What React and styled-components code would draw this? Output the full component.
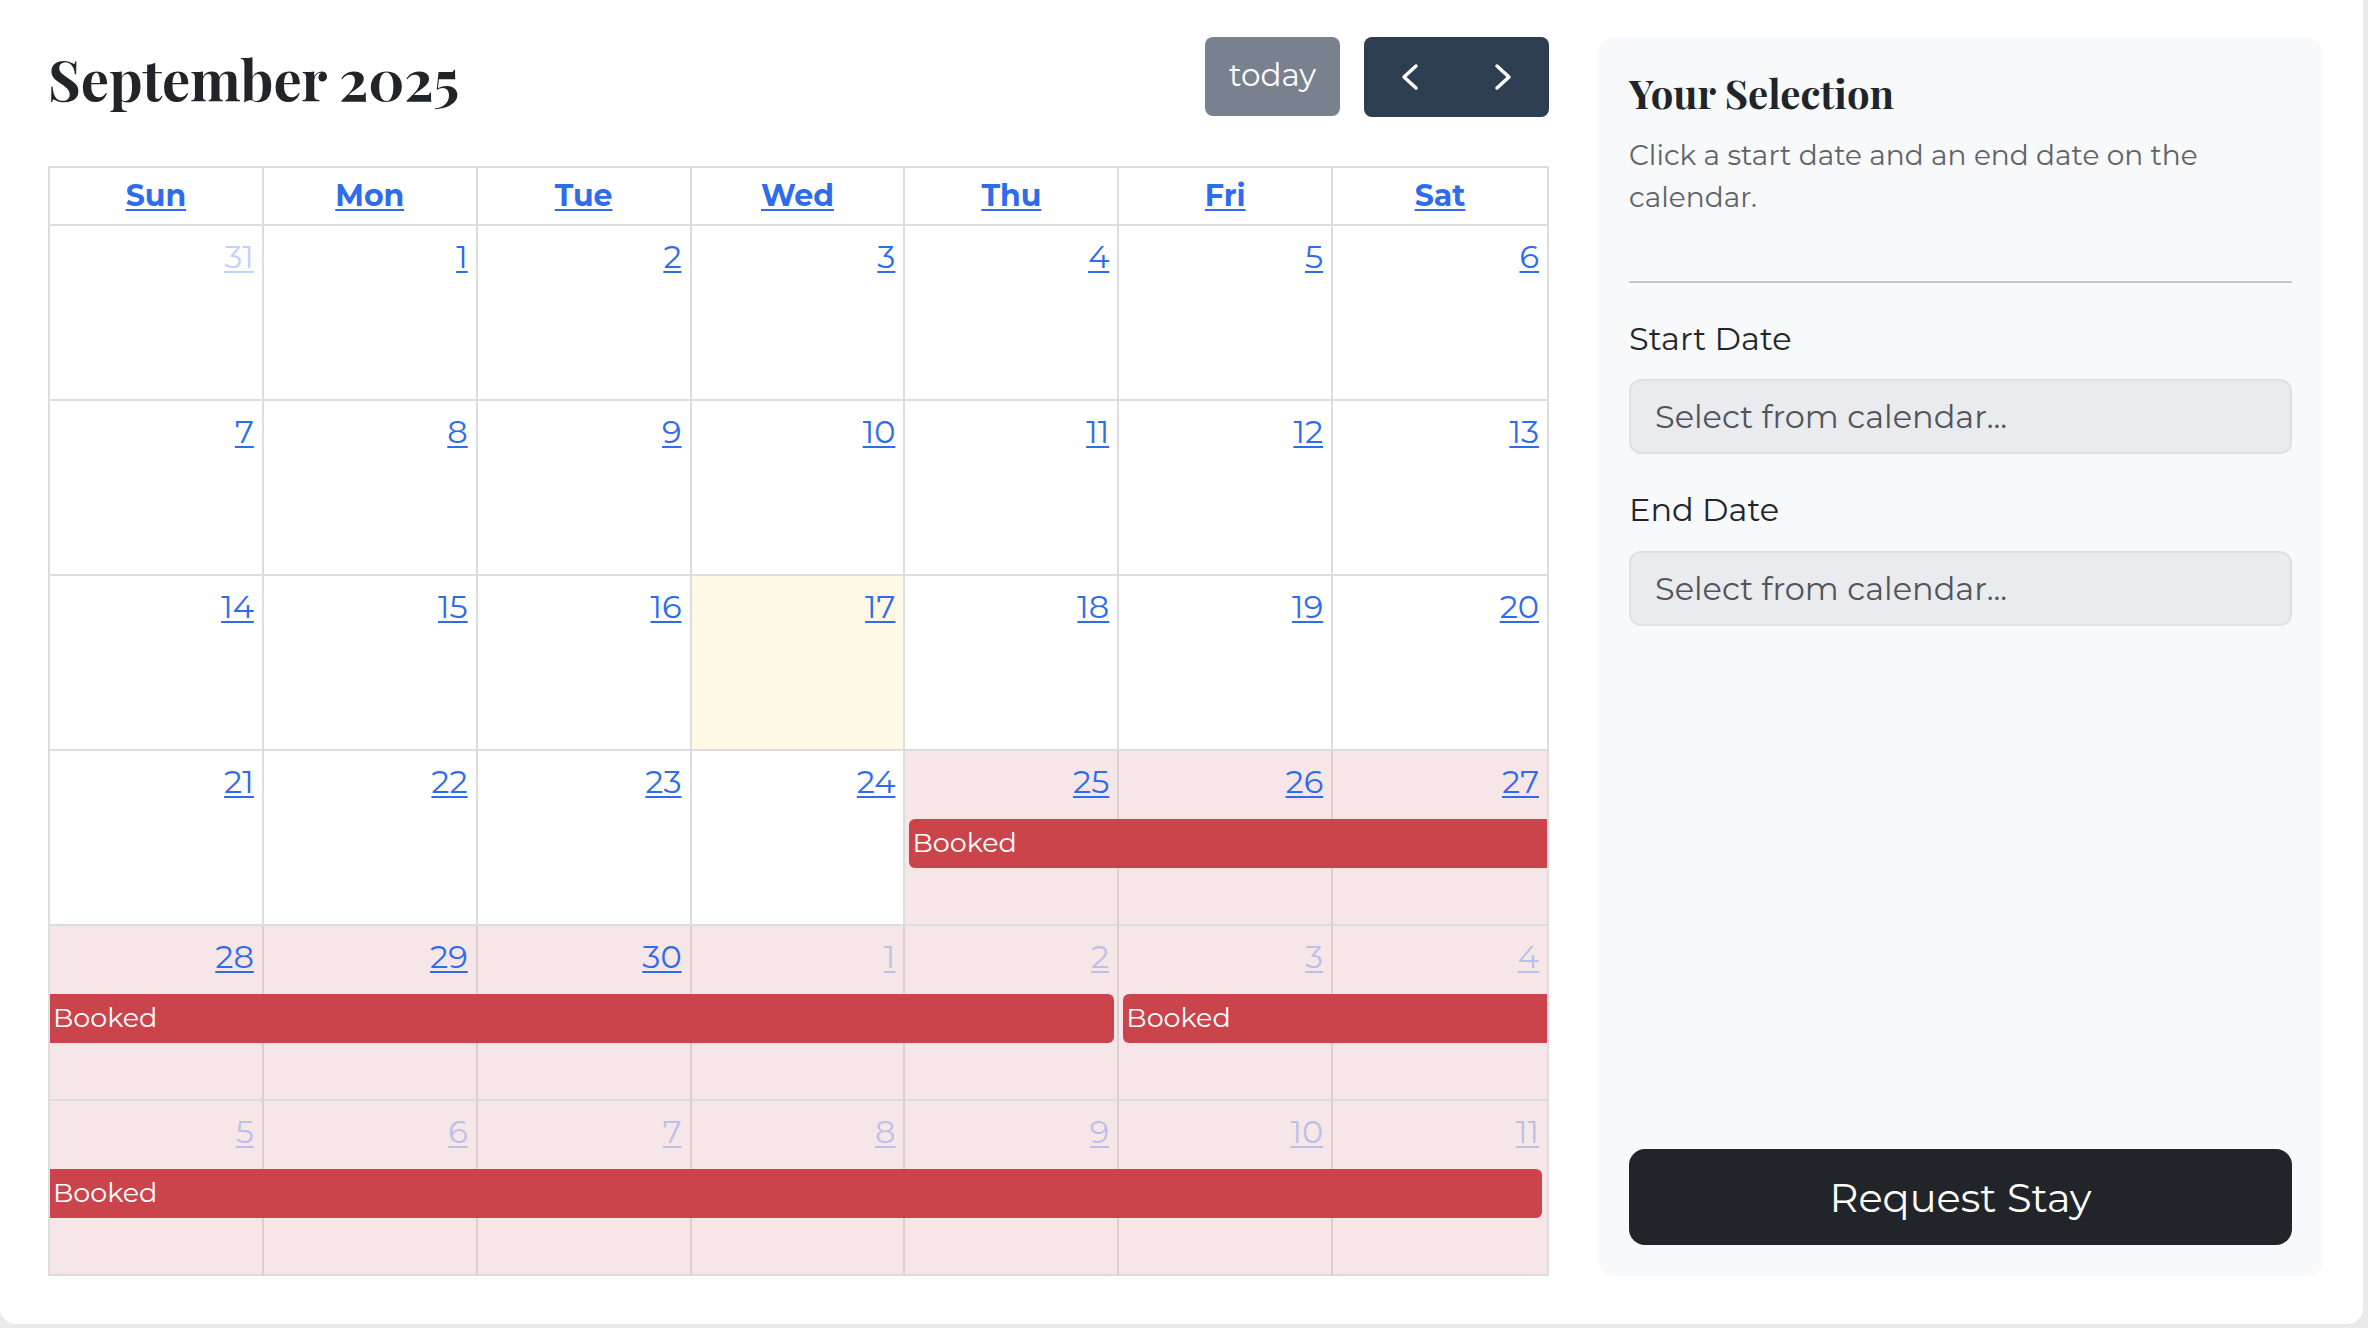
import React from "react"
import styled, { createGlobalStyle } from "styled-components"

const GlobalStyle = createGlobalStyle`
  * {
    box-sizing: border-box;
  }

  html, body {
    margin: 0;
    padding: 0;
    background: #eaeaea;
  }

  body {
    font-family: Montserrat, "DejaVu Sans", sans-serif;
    color: #212529;
  }
`

const LINK = "#2f6cec"
const BORDER = "#dddddd"
const SERIF = `"Playfair Display", "Liberation Serif", serif`

let Card = styled.div`
  width: 2363px;
  background: #ffffff;
  border-radius: 0 0 16px 16px;
  padding: 37px 40px 48px 48px;
  display: flex;
  gap: 49px;
`

let CalendarColumn = styled.section`
  width: 1501px;
  flex: none;
  display: flex;
  flex-direction: column;
`

let Toolbar = styled.div`
  display: flex;
  align-items: flex-start;
  height: 80px;
  margin-bottom: 49px;
`

let Title = styled.h1`
  flex: 1;
  margin: 8px 0 0;
  font-family: ${SERIF};
  font-weight: 700;
  font-size: 56px;
  line-height: 1.2;
  color: #212529;
`

let TodayButton = styled.button`
  width: 135px;
  height: 79px;
  margin-right: 24px;
  border: 0;
  border-radius: 8px;
  background: #7a818e;
  color: #ffffff;
  font-family: inherit;
  font-size: 31px;
  padding: 0 0 4px;
`

let NavGroup = styled.div`
  display: flex;
  height: 80px;
  border-radius: 8px;
  overflow: hidden;
  background: #2c3e50;
`

let NavButton = styled.button`
  width: 92.5px;
  height: 100%;
  padding: 0;
  border: 0;
  background: transparent;
  display: flex;
  align-items: center;
  justify-content: center;
`

let Table = styled.div`
  border: 2px solid ${BORDER};
  border-bottom: 0;
`

let HeadRow = styled.div`
  display: grid;
  grid-template-columns: repeat(7, 1fr);
`

let HeadCell = styled.div`
  height: 58px;
  border-bottom: 2px solid ${BORDER};
  border-right: ${p => (p.$last ? "0" : `2px solid ${BORDER}`)};
  display: flex;
  align-items: center;
  justify-content: center;
`

let HeadLink = styled.a`
  font-weight: 700;
  font-size: 30px;
  line-height: 1.2;
  color: ${LINK};
  text-decoration: underline;
  text-decoration-thickness: 2px;
  text-underline-offset: 3px;
`

let Week = styled.div`
  display: grid;
  grid-template-columns: repeat(7, 1fr);
  grid-template-rows: 68px 49px 1fr;
  height: 175px;
`

let DayCell = styled.div`
  grid-column: ${p => p.$col};
  grid-row: 1 / 4;
  background: ${p => (p.$booked ? "#f7e6e7" : p.$today ? "#fef9e4" : "#ffffff")};
  border-right: ${p => (p.$last ? "0" : `2px solid ${p.$booked ? "#dccdce" : BORDER}`)};
  border-bottom: 2px solid ${BORDER};
  display: flex;
  justify-content: flex-end;
  align-items: flex-start;
  padding: 12px 8px 0 0;
`

let DayNumber = styled.a`
  font-size: 32px;
  line-height: 1.2;
  color: ${LINK};
  text-decoration: underline;
  text-decoration-thickness: 2px;
  text-underline-offset: 3px;
  opacity: ${p => (p.$other ? 0.3 : 1)};
`

let Booking = styled.div`
  grid-column: ${p => p.$from} / ${p => p.$to};
  grid-row: 2;
  z-index: 1;
  display: flex;
  align-items: center;
  margin-left: ${p => (p.$head ? "4px" : "0")};
  margin-right: ${p => (p.$tail ? "5px" : "0")};
  padding: 0 0 2px 3px;
  border-radius: ${p => `${p.$head ? 6 : 0}px ${p.$tail ? 6 : 0}px ${p.$tail ? 6 : 0}px ${p.$head ? 6 : 0}px`};
  background: #cb444b;
  color: #ffffff;
  font-size: 27px;
`

let Sidebar = styled.aside`
  width: 725px;
  flex: none;
  display: flex;
  flex-direction: column;
  padding: 32px 31px 31px;
  border-radius: 16px;
  background: #f8f9fa;
`

let SideTitle = styled.h2`
  margin: 0;
  font-family: ${SERIF};
  font-weight: 700;
  font-size: 40px;
  line-height: 1.2;
  color: #212529;
`

let Hint = styled.p`
  margin: 17px 0 0;
  font-size: 28px;
  line-height: 42px;
  color: #5f6368;
`

let Divider = styled.hr`
  margin: 63px 0 0;
  height: 0;
  border: 0;
  border-top: 2px solid #c6c7cb;
`

let FieldLabel = styled.label`
  display: block;
  margin-top: 37px;
  font-size: 32px;
  line-height: 1.2;
  color: #212529;
`

let DateInput = styled.input`
  display: block;
  width: 100%;
  height: 75px;
  margin-top: 21px;
  padding: 0 24px;
  border: 2px solid #dee0e4;
  border-radius: 12px;
  background: #e9ebef;
  font-family: inherit;
  font-size: 32px;
  color: #51565c;

  &::placeholder {
    color: #51565c;
    opacity: 1;
  }
`

let RequestButton = styled.button`
  margin-top: auto;
  height: 96px;
  border: 0;
  border-radius: 16px;
  background: #212529;
  color: #ffffff;
  font-family: inherit;
  font-size: 40px;
`

const DAY_NAMES = ["Sun", "Mon", "Tue", "Wed", "Thu", "Fri", "Sat"]

// september 2025, shown sunday first, six rows
function buildWeeks() {
  let weeks = []
  let days = [{ d: 31, other: true }]
  for (let i = 1; i <= 30; i++) days.push({ d: i })
  for (let i = 1; i <= 11; i++) days.push({ d: i, other: true })
  for (let w = 0; w < 6; w++) {
    weeks.push(days.slice(w * 7, w * 7 + 7).map((day, col) => ({
      ...day,
      today: w === 2 && col === 3,
      booked: (w === 3 && col >= 4) || w >= 4,
    })))
  }
  return weeks
}

const WEEKS = buildWeeks()

const BOOKINGS = {
  3: [{ from: 4, to: 6, head: true, tail: false }],
  4: [
    { from: 0, to: 4, head: false, tail: true },
    { from: 5, to: 6, head: true, tail: false },
  ],
  5: [{ from: 0, to: 6, head: false, tail: true }],
}

function Chevron({ dir }) {
  let points = dir === "left" ? "16,3 4,14 16,25" : "4,3 16,14 4,25"
  return (
    <svg width="20" height="28" viewBox="0 0 20 28">
      <polyline points={points} fill="none" stroke="#fff" strokeWidth="3.5" strokeLinecap="round" strokeLinejoin="round" />
    </svg>
  )
}

export default function App() {
  return (
    <>
      <GlobalStyle />
      <Card>
        <CalendarColumn>
          <Toolbar>
            <Title>September 2025</Title>
            <TodayButton>today</TodayButton>
            <NavGroup>
              <NavButton aria-label="prev"><Chevron dir="left" /></NavButton>
              <NavButton aria-label="next"><Chevron dir="right" /></NavButton>
            </NavGroup>
          </Toolbar>

          <Table>
            <HeadRow>
              {DAY_NAMES.map((name, i) => (
                <HeadCell key={name} $last={i === 6}>
                  <HeadLink>{name}</HeadLink>
                </HeadCell>
              ))}
            </HeadRow>
            {WEEKS.map((week, w) => (
              <Week key={w}>
                {week.map((day, col) => (
                  <DayCell
                    key={col}
                    $col={col + 1}
                    $last={col === 6}
                    $booked={day.booked}
                    $today={day.today}
                  >
                    <DayNumber $other={day.other}>{day.d}</DayNumber>
                  </DayCell>
                ))}
                {(BOOKINGS[w] || []).map((b, i) => (
                  <Booking key={i} $from={b.from + 1} $to={b.to + 2} $head={b.head} $tail={b.tail}>
                    Booked
                  </Booking>
                ))}
              </Week>
            ))}
          </Table>
        </CalendarColumn>

        <Sidebar>
          <SideTitle>Your Selection</SideTitle>
          <Hint>Click a start date and an end date on the calendar.</Hint>
          <Divider />
          <FieldLabel>Start Date</FieldLabel>
          <DateInput readOnly placeholder="Select from calendar..." />
          <FieldLabel>End Date</FieldLabel>
          <DateInput readOnly placeholder="Select from calendar..." />
          <RequestButton>Request Stay</RequestButton>
        </Sidebar>
      </Card>
    </>
  )
}
